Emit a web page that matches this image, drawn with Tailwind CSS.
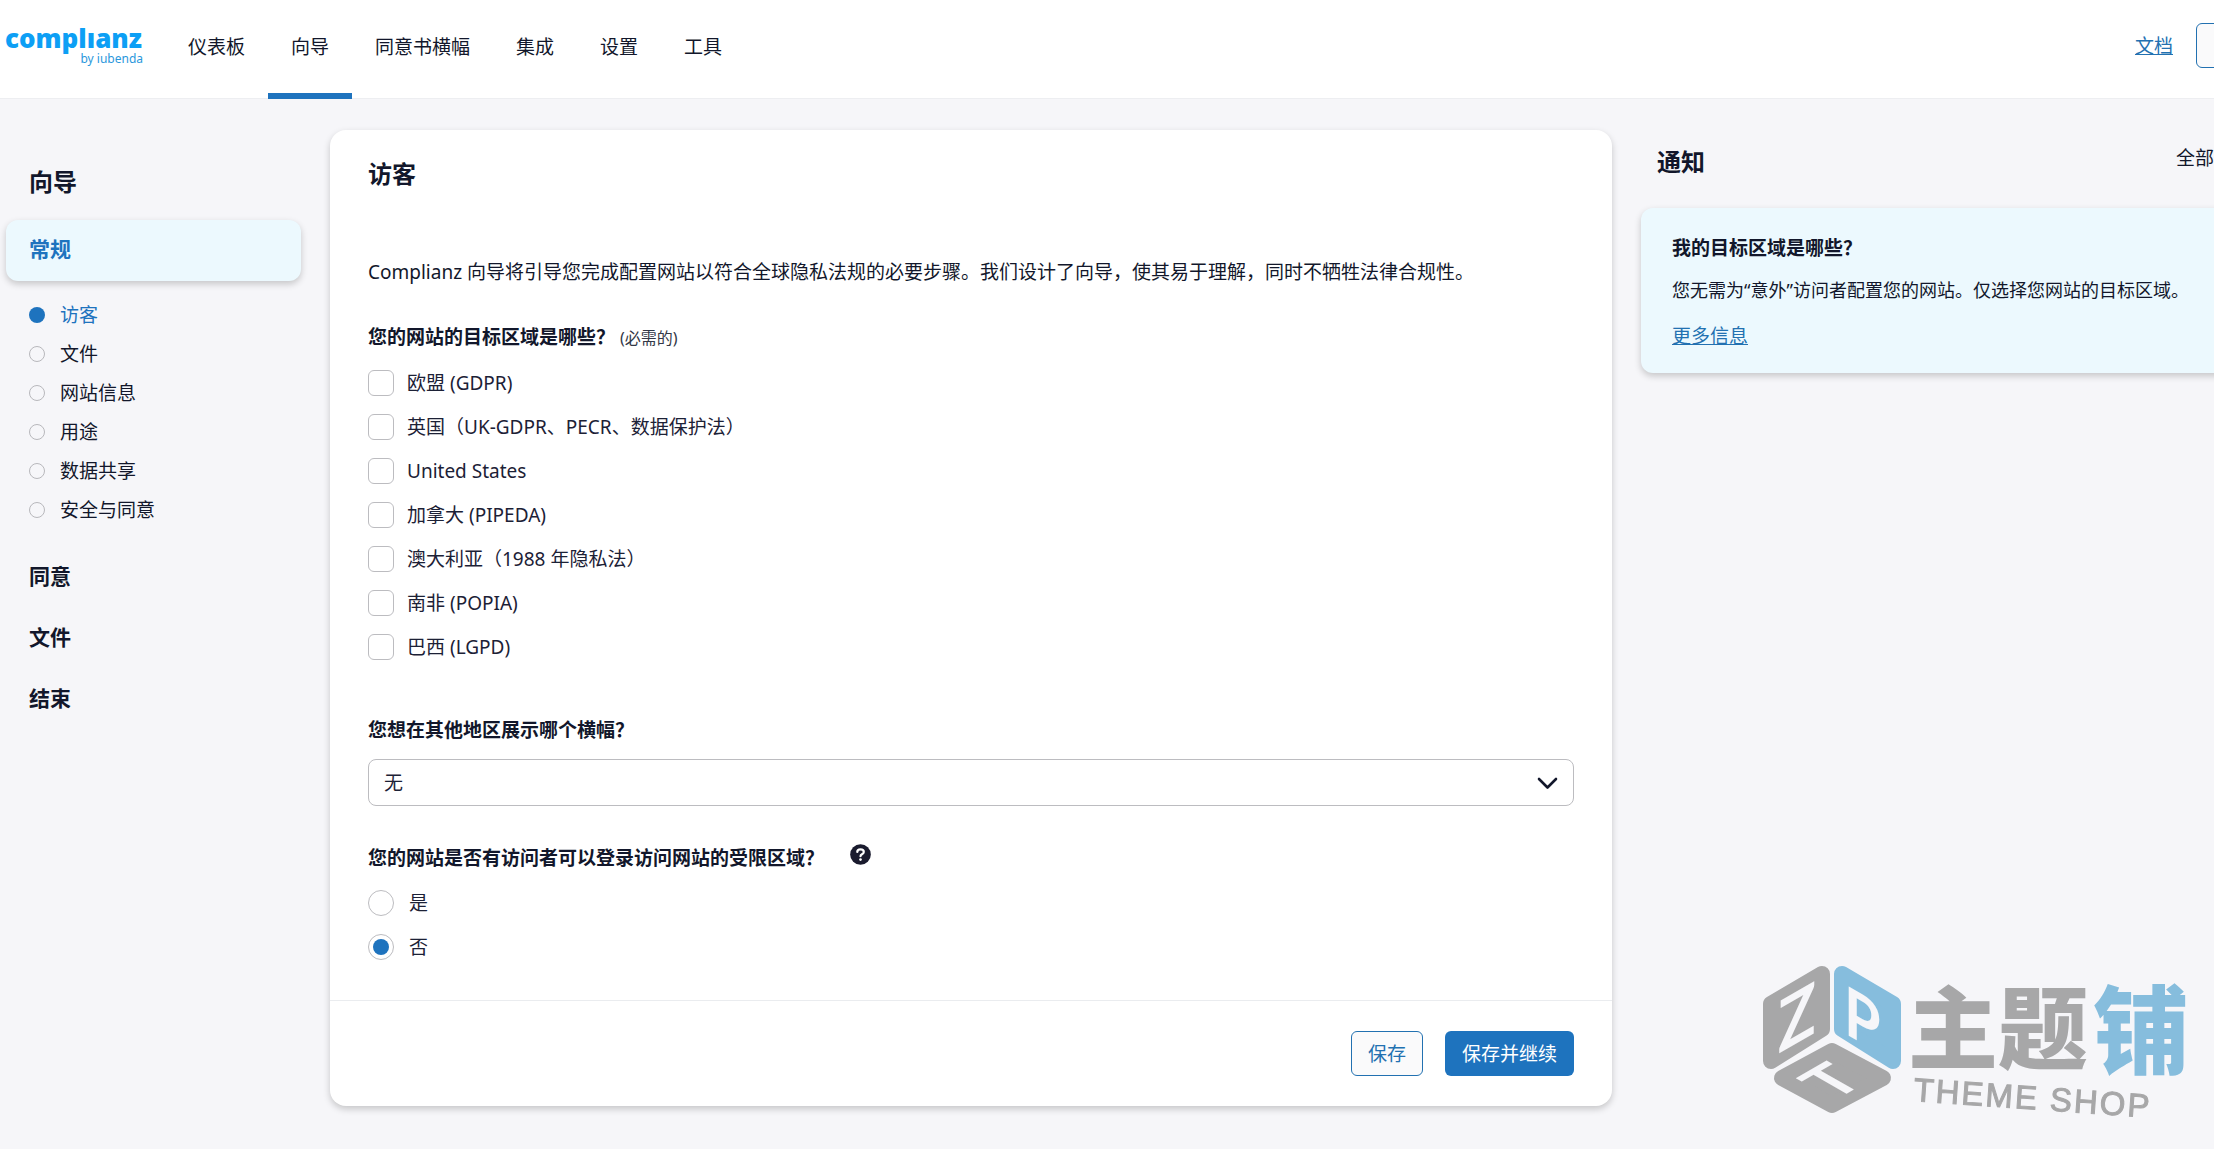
<!DOCTYPE html>
<html lang="zh-CN">
<head>
    <meta charset="UTF-8">
    <meta name="viewport" content="width=device-width, initial-scale=1.0">
    <title>Complianz 向导</title>
    <script src="https://cdn.jsdelivr.net/npm/@tailwindcss/browser@4"></script>
</head>
<body class="min-h-screen overflow-x-hidden bg-[#f6f6f9] font-['Noto_Sans','Noto_Sans_CJK_SC',sans-serif] text-[19px] leading-7 text-[#12172b]">

    <!-- Top bar -->
    <header class="flex h-[99px] items-stretch border-b border-gray-200/70 bg-white">
        <a href="#" aria-label="complianz by iubenda" class="block w-[165px] shrink-0">
            <svg class="h-[98px] w-[165px]" viewBox="0 0 165 98" fill="#0d9ff5">
                <text x="5" y="48" font-family="Open Sans, sans-serif" font-weight="800" font-size="26">complıanz</text>
                <text x="143" y="63" text-anchor="end" font-family="Noto Sans, sans-serif" font-size="12" fill="#2a97dc">by iubenda</text>
            </svg>
        </a>
        <nav class="-mb-px flex">
            <a href="#" class="flex border-b-6 border-transparent px-[23px] pt-[33px]">仪表板</a>
            <a href="#" class="flex border-b-6 border-[#1e73be] px-[23px] pt-[33px]">向导</a>
            <a href="#" class="flex border-b-6 border-transparent px-[23px] pt-[33px]">同意书横幅</a>
            <a href="#" class="flex border-b-6 border-transparent px-[23px] pt-[33px]">集成</a>
            <a href="#" class="flex border-b-6 border-transparent px-[23px] pt-[33px]">设置</a>
            <a href="#" class="flex border-b-6 border-transparent px-[23px] pt-[33px]">工具</a>
        </nav>
        <div class="-mr-14 ml-auto flex items-center gap-[23px] pb-[7px]">
            <a href="#" class="text-[#2271b1] underline">文档</a>
            <button type="button" class="h-[45px] w-[74px] rounded-md border border-[#2271b1] bg-[#fafafb] text-[#2271b1]">支持</button>
        </div>
    </header>

    <main class="grid grid-cols-[295px_minmax(0,1fr)_573px] items-start gap-[29px] pt-[31px] pl-1.5">

        <!-- Wizard menu -->
        <aside class="pt-9">
            <h1 class="mb-[22px] pl-[23px] text-2xl leading-8 font-bold">向导</h1>
            <a href="#" class="flex h-[61px] items-center rounded-xl bg-[#ecf9fe] pb-1 pl-[23px] text-[21px] font-bold text-[#1e73be] shadow-[0_3px_7px_rgba(0,0,0,0.2)]">常规</a>
            <ul class="mt-[14px] mb-4 pl-[23px]">
                <li class="flex h-[39px] items-center gap-[15px] text-[#1e73be]"><span class="size-4 rounded-full bg-[#1e73be]"></span><a href="#">访客</a></li>
                <li class="flex h-[39px] items-center gap-[15px]"><span class="size-4 rounded-full border border-[#b8b8bc]"></span><a href="#">文件</a></li>
                <li class="flex h-[39px] items-center gap-[15px]"><span class="size-4 rounded-full border border-[#b8b8bc]"></span><a href="#">网站信息</a></li>
                <li class="flex h-[39px] items-center gap-[15px]"><span class="size-4 rounded-full border border-[#b8b8bc]"></span><a href="#">用途</a></li>
                <li class="flex h-[39px] items-center gap-[15px]"><span class="size-4 rounded-full border border-[#b8b8bc]"></span><a href="#">数据共享</a></li>
                <li class="flex h-[39px] items-center gap-[15px]"><span class="size-4 rounded-full border border-[#b8b8bc]"></span><a href="#">安全与同意</a></li>
            </ul>
            <a href="#" class="flex h-[61px] items-center pl-[23px] text-[21px] font-bold">同意</a>
            <a href="#" class="flex h-[61px] items-center pl-[23px] text-[21px] font-bold">文件</a>
            <a href="#" class="flex h-[61px] items-center pl-[23px] text-[21px] font-bold">结束</a>
        </aside>

        <!-- Form -->
        <form class="rounded-2xl bg-white shadow-[0_3px_7px_rgba(0,0,0,0.2)]">
            <div class="px-[38px] pt-7 pb-[31px]">
                <h2 class="text-2xl leading-8 font-bold">访客</h2>
                <p class="mt-[68px]">Complianz 向导将引导您完成配置网站以符合全球隐私法规的必要步骤。我们设计了向导，使其易于理解，同时不牺牲法律合规性。</p>

                <fieldset class="mt-[37px]">
                    <legend class="font-bold">您的网站的目标区域是哪些？ <span class="text-base font-normal text-[#333847]">(必需的)</span></legend>
                    <div class="mt-[10px] flex flex-col text-[#1c2136]">
                        <label class="flex h-11 items-center gap-[13px]"><input type="checkbox" class="size-[26px] appearance-none rounded-md border border-[#bcbcc0]">欧盟 (GDPR)</label>
                        <label class="flex h-11 items-center gap-[13px]"><input type="checkbox" class="size-[26px] appearance-none rounded-md border border-[#bcbcc0]">英国（UK-GDPR、PECR、数据保护法）</label>
                        <label class="flex h-11 items-center gap-[13px]"><input type="checkbox" class="size-[26px] appearance-none rounded-md border border-[#bcbcc0]">United States</label>
                        <label class="flex h-11 items-center gap-[13px]"><input type="checkbox" class="size-[26px] appearance-none rounded-md border border-[#bcbcc0]">加拿大 (PIPEDA)</label>
                        <label class="flex h-11 items-center gap-[13px]"><input type="checkbox" class="size-[26px] appearance-none rounded-md border border-[#bcbcc0]">澳大利亚（1988 年隐私法）</label>
                        <label class="flex h-11 items-center gap-[13px]"><input type="checkbox" class="size-[26px] appearance-none rounded-md border border-[#bcbcc0]">南非 (POPIA)</label>
                        <label class="flex h-11 items-center gap-[13px]"><input type="checkbox" class="size-[26px] appearance-none rounded-md border border-[#bcbcc0]">巴西 (LGPD)</label>
                    </div>
                </fieldset>

                <label for="other-region" class="mt-[47px] block font-bold">您想在其他地区展示哪个横幅？</label>
                <div class="relative mt-[15px]">
                    <select id="other-region" class="block h-[47px] w-full appearance-none rounded-lg border border-[#bcbcc0] bg-white px-[15px] text-[#1c2136]">
                        <option>无</option>
                    </select>
                    <svg class="pointer-events-none absolute top-[18px] right-4 h-[13px] w-[21px]" viewBox="0 0 21 13" fill="none" stroke="#12172b" stroke-width="2.6" stroke-linecap="round" stroke-linejoin="round"><path d="M2 2l8.5 8.5L19 2"/></svg>
                </div>

                <fieldset class="mt-[38px]">
                    <legend class="flex gap-[26px] font-bold">您的网站是否有访问者可以登录访问网站的受限区域？
                        <svg class="size-[21px]" viewBox="0 0 512 512" role="img" aria-label="帮助"><circle cx="256" cy="256" r="252" fill="#1a1b2e"/><path d="M178 192c0-38 34-60 78-60s80 22 80 60c0 34-22 46-44 58-22 12-36 22-36 46" fill="none" stroke="#fff" stroke-width="54" stroke-linecap="round"/><circle cx="256" cy="380" r="32" fill="#fff"/></svg>
                    </legend>
                    <div class="mt-[9px] flex flex-col text-[#1c2136]">
                        <label class="flex h-11 items-center gap-[15px]"><input type="radio" name="restricted" class="size-[26px] appearance-none rounded-full border border-[#bcbcc0] bg-white bg-clip-content p-1 checked:bg-[#1e73be]">是</label>
                        <label class="flex h-11 items-center gap-[15px]"><input type="radio" name="restricted" checked class="size-[26px] appearance-none rounded-full border border-[#bcbcc0] bg-white bg-clip-content p-1 checked:bg-[#1e73be]">否</label>
                    </div>
                </fieldset>
            </div>
            <div class="flex justify-end gap-[22px] border-t border-gray-200/80 px-[38px] py-[30px]">
                <button type="button" class="h-[45px] rounded-md border border-[#2271b1] bg-[#fafafb] px-4 text-[#2271b1]">保存</button>
                <button type="submit" class="h-[45px] rounded-md bg-[#1e73be] px-[17px] text-white">保存并继续</button>
            </div>
        </form>

        <!-- Notices, the column runs off the right edge -->
        <aside class="pt-3">
            <div class="mb-[30px] flex justify-between pl-4">
                <h2 class="mt-1 text-2xl leading-8 font-bold">通知</h2>
                <a href="#" class="mt-0.5">全部</a>
            </div>
            <div class="-mr-6 rounded-xl bg-[#ecf9fe] px-[31px] pt-[26px] pb-[23px] shadow-[0_3px_7px_rgba(0,0,0,0.2)]">
                <h3 class="font-bold">我的目标区域是哪些？</h3>
                <p class="mt-[14px] text-lg leading-7">您无需为“意外”访问者配置您的网站。仅选择您网站的目标区域。</p>
                <a href="#" class="mt-[18px] block text-[#2271b1] underline">更多信息</a>
            </div>
        </aside>
    </main>

    <!-- Theme Shop watermark -->
    <svg class="pointer-events-none fixed right-0 bottom-[8px] h-[200px] w-[474px]" viewBox="0 0 474 200" role="img" aria-label="ZPT 主题铺 THEME SHOP">
        <g stroke-linejoin="round" stroke-width="16">
            <path d="M82 33L31 63V120L82 88Z" fill="#a7a7a8" stroke="#a7a7a8"/>
            <path d="M102 33L153 63V120L102 88Z" fill="#86bddd" stroke="#86bddd"/>
            <path d="M92 110L42 137L92 164L143 137Z" fill="#a7a7a8" stroke="#a7a7a8"/>
        </g>
        <g fill="#f6f6f9" font-family="Lato, sans-serif" font-weight="700">
            <text transform="matrix(0.87 -0.5 0 1 38 113)" font-size="72">Z</text>
            <text transform="matrix(0.87 0.5 0 1 104 92)" font-size="68">P</text>
            <text transform="matrix(0.87 -0.5 0.87 0.5 94 160)" font-size="62">T</text>
        </g>
        <g font-family="Noto Sans CJK SC, sans-serif" font-weight="900">
            <text x="168" y="121" font-size="90" fill="#a7a7a8">主题</text>
            <text x="353" y="125" font-size="96" fill="#86bddd">铺</text>
        </g>
        <text transform="translate(173 160) rotate(4)" font-family="Liberation Sans, sans-serif" font-size="33" fill="#a7a7a8" stroke="#a7a7a8" letter-spacing="2">THEME SHOP</text>
    </svg>

</body>
</html>
